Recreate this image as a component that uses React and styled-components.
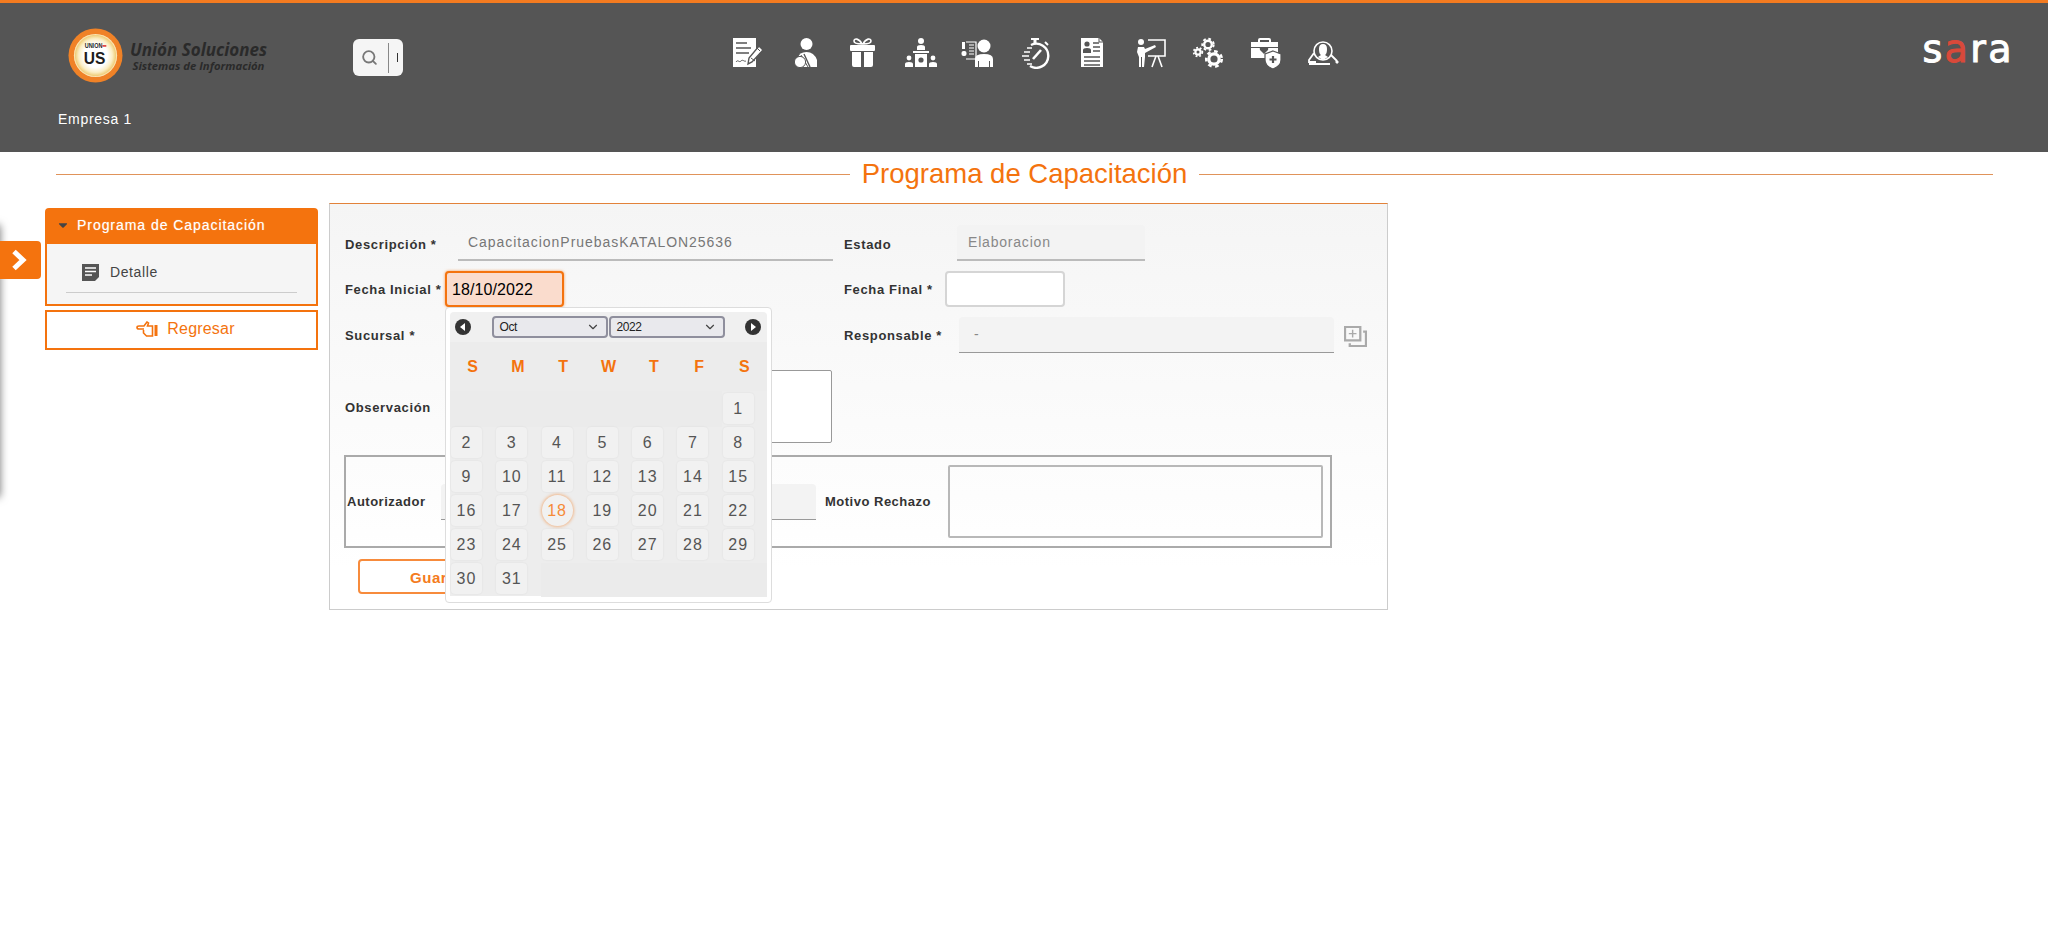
import React from 'react';
import styled, { createGlobalStyle } from 'styled-components';
import { FaCaretDown } from 'react-icons/fa';
import { ChevronDown, Search } from 'lucide-react';

const GRAY = '#555555';
const ORANGE = '#f4730e';

const DAYS = Array.from({ length: 31 }, (_, i) => i + 1);
const WEEK = ['S', 'M', 'T', 'W', 'T', 'F', 'S'];

const Doc = () => (
  <IconSvg viewBox="0 0 34 32">
    <path d="M3 1h23v29H3z" fill="#fff" />
    <path d="M6 6h11M6 11h15M6 16h13" stroke={GRAY} strokeWidth="1.6" />
    <path d="M6 25c2-3 3 1 5-1s3 1 5 0" stroke={GRAY} strokeWidth="1" fill="none" />
    <path d="M18 27l1-6L29 9l4 4-11 12z" fill="#fff" stroke={GRAY} strokeWidth="1.4" />
    <path d="M21 21l4 3M27 11l3 3" stroke={GRAY} strokeWidth="1" />
  </IconSvg>
);

const PersonMoney = () => (
  <IconSvg viewBox="0 0 34 32">
    <circle cx="18.500" cy="7" r="6" fill="#fff" />
    <path d="M10 30V21q1-6 8.500-6t10.500 8v7z" fill="#fff" />
    <path d="M16 17l6 13" stroke={GRAY} strokeWidth="1.4" />
    <path d="M13 18l7 12" stroke={GRAY} strokeWidth="1" />
    <circle cx="12" cy="25" r="5.6" fill="#fff" stroke={GRAY} strokeWidth="1" />
  </IconSvg>
);

const Gift = () => (
  <IconSvg viewBox="0 0 34 32">
    <g transform="translate(2 0)">
      <path d="M4 8h23q1 0 1 1v4q0 1-1 1H4q-1 0-1-1V9q0-1 1-1zM5 15h9v15H7q-2 0-2-2zM17 15h9v13q0 2-2 2h-7z" fill="#fff" />
      <path d="M15 7C12 1 7 1 7 4c0 2 4 3 8 3zM16 7c3-6 8-6 8-3 0 2-4 3-8 3z" fill="none" stroke="#fff" strokeWidth="1.6" />
    </g>
  </IconSvg>
);

const Podium = () => (
  <IconSvg viewBox="0 0 34 32">
    <circle cx="18" cy="4" r="3" fill="#fff" />
    <path d="M14 13v-3q0-2 4-2t4 2v3zM10 14h16v2H10zM12 17h12v13H12z" fill="#fff" />
    <circle cx="18" cy="23" r="2.6" fill={GRAY} />
    <circle cx="6" cy="21" r="2.4" fill="#fff" />
    <circle cx="30" cy="21" r="2.4" fill="#fff" />
    <path d="M2 30v-3q0-2 4-2t4 2v3zM26 30v-3q0-2 4-2t4 2v3z" fill="#fff" />
  </IconSvg>
);

const PersonBill = () => (
  <IconSvg viewBox="0 0 34 32">
    <circle cx="23" cy="9" r="6.5" fill="#fff" />
    <path d="M14 30V22q0-5 9-5t9 5v8h-3v-6h-1v6H18v-6h-1v6z" fill="#fff" />
    <path d="M5 5h10v17H5" fill="none" stroke="#fff" strokeWidth="1.2" />
    <path d="M8 8h5M8 11h5M8 14h5M8 17h5" stroke="#fff" strokeWidth="1.2" />
    <path d="M1 5h3v7H1z" fill="#fff" />
    <rect x="0.5" y="14" width="5" height="5" rx="2" fill="#fff" />
  </IconSvg>
);

const Stopwatch = () => (
  <IconSvg viewBox="0 0 34 32">
    <path d="M13 1h8v2h-8zM15.500 3h3v3h-3z" fill="#fff" />
    <path d="M13 8a12 12 0 1 1-1 21" fill="none" stroke="#fff" strokeWidth="2.400" />
    <path d="M27 5l3 3" stroke="#fff" strokeWidth="2" />
    <path d="M15 22l8-9" stroke="#fff" strokeWidth="2.600" />
    <path d="M9 11h5M6 15h6M4 19h7M6 23h6M9 27h5" stroke="#fff" strokeWidth="1.700" />
  </IconSvg>
);

const Resume = () => (
  <IconSvg viewBox="0 0 34 32">
    <path d="M5 1h18l4 4v25H5z" fill="#fff" />
    <path d="M23 1v4h4" fill="none" stroke={GRAY} strokeWidth="1" />
    <circle cx="11" cy="7" r="2.600" fill={GRAY} />
    <path d="M7 16v-3q0-2 4-2t4 2v3z" fill={GRAY} />
    <path d="M17 6h6M17 10h7M17 14h7M8 20h16M8 24h16M8 28h16" stroke={GRAY} strokeWidth="1.500" />
  </IconSvg>
);

const Presenter = () => (
  <IconSvg viewBox="0 0 34 32">
    <circle cx="7" cy="5" r="3" fill="#fff" />
    <path d="M4 10h6l1 2 10-4 1 2-11 6v4l-1 10H8v-10H7v10H5V20L3 15z" fill="#fff" />
    <path d="M14 3h17v16H14" fill="none" stroke="#fff" strokeWidth="1.600" />
    <path d="M22 19l-4 11M24 19l4 11" stroke="#fff" strokeWidth="1.600" />
  </IconSvg>
);

const Gear = ({ cx, cy, r, w }) => (
  <g fill="none" stroke="#fff">
    <circle cx={cx} cy={cy} r={r} strokeWidth={w} />
    <circle cx={cx} cy={cy} r={r + w * 0.8} strokeWidth={w * 0.8} strokeDasharray={`${r * 0.7} ${r * 0.7}`} />
  </g>
);

const Gears = () => (
  <IconSvg viewBox="0 0 34 32">
    <g transform="translate(1 0)">
      <Gear cx={6} cy={15} r={2.600} w={2.200} />
      <Gear cx={16} cy={7.500} r={3.800} w={2.400} />
      <Gear cx={22} cy={22} r={5.200} w={3.200} />
    </g>
  </IconSvg>
);

const MedKit = () => (
  <IconSvg viewBox="0 0 34 32">
    <g transform="translate(1 0)">
      <path d="M8 5V3q0-2 2-2h9q2 0 2 2v2h-2V3h-9v2z" fill="#fff" />
      <path d="M1 5h27v5H1zM1 11h27v7H17l-2 2v1H1z" fill="#fff" />
      <path d="M14 17l-4-4q-1-3 2-3 1 0 2 1 1-1 2-1 3 0 2 3z" fill={GRAY} />
      <path d="M23 14l8 3v6q0 6-8 9-8-3-8-9v-6z" fill="#fff" stroke={GRAY} strokeWidth="1.200" />
      <path d="M23 19v7M19.500 22.500h7" stroke={GRAY} strokeWidth="2.200" />
    </g>
  </IconSvg>
);

const HeadSearch = () => (
  <IconSvg viewBox="0 0 34 32">
    <circle cx="16" cy="14" r="9" fill="none" stroke="#fff" strokeWidth="1.600" />
    <path d="M16 7q4 0 4 5t-2 6l3 2-5 3-5-3 3-2q-2-1-2-6t4-5z" fill="#fff" />
    <path d="M7 16l-5 7v2h7M24 18l6 6" fill="none" stroke="#fff" strokeWidth="1.800" />
    <path d="M2 26h21v2H2z" fill="#fff" />
    <path d="M29 24l2 2" stroke="#fff" strokeWidth="2.600" />
  </IconSvg>
);

const MENU_ICONS = [Doc, PersonMoney, Gift, Podium, PersonBill, Stopwatch, Resume, Presenter, Gears, MedKit, HeadSearch];

const CompanyLogo = () => (
  <LogoWrap>
    <LogoMark viewBox="0 0 56 56">
      <defs>
        <radialGradient id="logoCore">
          <stop offset="55%" stopColor="#ffffff" />
          <stop offset="78%" stopColor="#fbeec4" />
          <stop offset="93%" stopColor="#f0cf7e" />
          <stop offset="100%" stopColor="#fff3d2" />
        </radialGradient>
      </defs>
      <circle cx="28" cy="28" r="27.500" fill="#f08227" />
      <circle cx="28" cy="28" r="22" fill="url(#logoCore)" />
      <text x="26" y="20" fontFamily="Liberation Sans" fontSize="7" fontWeight="700" textAnchor="middle" textLength="18" lengthAdjust="spacingAndGlyphs" fill="#222">UNION</text>
      <text x="27" y="37" fontFamily="Liberation Sans" fontSize="17" fontWeight="700" textAnchor="middle" textLength="22" lengthAdjust="spacingAndGlyphs" fill="#1d1d1d">US</text>
      <rect x="35" y="17.500" width="4" height="1.500" fill="#d22" />
    </LogoMark>
    <LogoText>
      <LogoName>Unión Soluciones</LogoName>
      <LogoSub>Sistemas de Información</LogoSub>
    </LogoText>
  </LogoWrap>
);

const App = () => (
  <>
    <GlobalStyle />
    <Header>
      <HeaderTop>
        <CompanyLogo />
        <SearchBox>
          <Search size={17} strokeWidth={2.600} color="#777" />
          <SearchDivider />
          <SearchCaret />
        </SearchBox>
        <IconMenu>
          {MENU_ICONS.map((Icon, i) => (
            <MenuItem key={i}>
              <Icon />
            </MenuItem>
          ))}
        </IconMenu>
        <SaraLogo>
          s<SaraRed>a</SaraRed>ra
        </SaraLogo>
      </HeaderTop>
      <Company>Empresa 1</Company>
    </Header>

    <TitleRow>
      <TitleLine />
      <Title>Programa de Capacitación</Title>
      <TitleLine />
    </TitleRow>

    <DrawerEdge />
    <DrawerToggle>
      <svg width="17" height="22" viewBox="0 0 17 22">
        <path d="M3 2.500l9 8.500-9 8.500" fill="none" stroke="#fff" strokeWidth="5" />
      </svg>
    </DrawerToggle>

    <Main>
      <Sidebar>
        <AccordionHead>
          <FaCaretDown size={14} color="#444" />
          Programa de Capacitación
        </AccordionHead>
        <AccordionBody>
          <AccordionItem>
            <svg width="17" height="17" viewBox="0 0 17 17">
              <path d="M0 0h17v13l-4 4H0z" fill="#555" />
              <path d="M3 4h11M3 7.500h11M3 11h7" stroke="#fff" strokeWidth="1.400" />
            </svg>
            Detalle
          </AccordionItem>
        </AccordionBody>
        <BackButton>
          <svg width="22" height="17" viewBox="0 0 22 17">
            <path d="M1 6.500q0-1.500 2-1.500h5l3-4 1.500 1-1 3h5v10h-6l-3-3v-3M1 6.500q0 1.500 2 1.500h5" fill="none" stroke={ORANGE} strokeWidth="1.600" />
            <path d="M18.500 4h3v11h-3z" fill={ORANGE} />
          </svg>
          Regresar
        </BackButton>
      </Sidebar>

      <FormPanel>
        <FormGrid>
          <Field>
            <Label $w={113} $dy={2}>Descripción *</Label>
            <TextValue>CapacitacionPruebasKATALON25636</TextValue>
          </Field>
          <Field>
            <Label $w={113} $dy={2}>Estado</Label>
            <ReadOnly $w={188} $line="2px solid #bbb">Elaboracion</ReadOnly>
          </Field>

          <Field>
            <Label $w={100}>Fecha Inicial *</Label>
            <DateWrap>
              <DateInput $focused $w={119}>18/10/2022</DateInput>
              <Picker>
                <PickerHead>
                  <NavButton>
                    <svg width="16" height="16" viewBox="0 0 16 16">
                      <circle cx="8" cy="8" r="8" fill="#333" />
                      <path d="M10 4v8L5 8z" fill="#fff" />
                    </svg>
                  </NavButton>
                  <Selects>
                    <FakeSelect>
                      Oct
                      <ChevronDown size={14} color="#444" />
                    </FakeSelect>
                    <FakeSelect>
                      2022
                      <ChevronDown size={14} color="#444" />
                    </FakeSelect>
                  </Selects>
                  <NavButton>
                    <svg width="16" height="16" viewBox="0 0 16 16">
                      <circle cx="8" cy="8" r="8" fill="#333" />
                      <path d="M6 4v8l5-4z" fill="#fff" />
                    </svg>
                  </NavButton>
                </PickerHead>
                <WeekRow>
                  {WEEK.map((d, i) => (
                    <WeekDay key={i}>{d}</WeekDay>
                  ))}
                </WeekRow>
                <DayGrid>
                  <EmptyCells $span={6} $first />
                  {DAYS.map((d) => (
                    <Day key={d} $today={d === 18}>
                      {d}
                    </Day>
                  ))}
                  <EmptyCells $span={5} />
                </DayGrid>
              </Picker>
            </DateWrap>
          </Field>
          <Field>
            <Label $w={101}>Fecha Final *</Label>
            <DateInput $w={120} />
          </Field>

          <Field>
            <Label $w={113}>Sucursal *</Label>
            <ReadOnly $w={240} $line="1px solid #aaa" />
          </Field>
          <Field>
            <Label $w={115}>Responsable *</Label>
            <ReadOnly $w={375} $pad={15} $line="1px solid #999">-</ReadOnly>
            <CopyIcon viewBox="0 0 24 22">
              <path d="M1 1h16v14H1z" fill="none" stroke="#aaa" strokeWidth="2.400" />
              <path d="M9 4v8M5 8h8" stroke="#aaa" strokeWidth="1.500" />
              <path d="M20 6h3v15H6v-3" fill="none" stroke="#aaa" strokeWidth="2.400" />
            </CopyIcon>
          </Field>

          <ObservationField>
            <Label $w={113} $dy={2}>Observación</Label>
            <TextArea $h={73} $grow $bg="#fff" $line="1px solid #999" />
          </ObservationField>
        </FormGrid>

        <AuthBox>
          <Label $w={94} $tight>Autorizador</Label>
          <ReadOnly $w={375} $line="1px solid #999" />
          <MotiveLabel $tight>Motivo Rechazo</MotiveLabel>
          <TextArea $h={73} $w={375} $bg="transparent" $line="2px solid #b8b8b8" />
        </AuthBox>

        <SaveButton>Guardar</SaveButton>
      </FormPanel>
    </Main>
  </>
);

export default App;

const GlobalStyle = createGlobalStyle`
  html, body {
    margin: 0;
    background: #fff;
    font-family: "Liberation Sans", Arial, sans-serif;
  }
  body {
    min-height: 947px;
    position: relative;
    overflow: hidden;
  }
`;

const Header = styled.header`
  height: 152px;
  box-sizing: border-box;
  border-top: 3px solid #f47b20;
  background: ${GRAY};
  padding-top: 25px;
`;

const HeaderTop = styled.div`
  display: flex;
  align-items: flex-start;
  height: 54px;
  padding-left: 68px;
`;

const LogoWrap = styled.div`
  display: flex;
  align-items: center;
  width: 285px;
  gap: 7px;
`;

const LogoMark = styled.svg`
  width: 55px;
  height: 55px;
  flex-shrink: 0;
`;

const LogoText = styled.div`
  display: flex;
  flex-direction: column;
  align-items: center;
  color: #2a2a2a;
  font-family: "Open Sans", sans-serif;
  font-style: italic;
  font-weight: 700;
`;

const LogoName = styled.span`
  font-size: 17px;
  line-height: 21px;
  white-space: nowrap;
`;

const LogoSub = styled.span`
  font-size: 11.300px;
  line-height: 12px;
  white-space: nowrap;
`;

const SearchBox = styled.div`
  display: flex;
  align-items: center;
  width: 50px;
  height: 37px;
  margin-top: 11px;
  box-sizing: border-box;
  padding-left: 8px;
  background: #f5f5f5;
  border-radius: 6px;
`;

const SearchDivider = styled.span`
  width: 1px;
  height: 30px;
  margin-left: 10px;
  background: #888;
`;

const SearchCaret = styled.span`
  width: 1px;
  height: 9px;
  margin-left: 8px;
  background: #333;
`;

const IconMenu = styled.nav`
  display: flex;
  margin-left: 315px;
  margin-top: 9px;
`;

const MenuItem = styled.div`
  width: 57.700px;
  display: flex;
  justify-content: center;
`;

const IconSvg = styled.svg`
  width: 34px;
  height: 32px;
  display: block;
`;

const SaraLogo = styled.div`
  margin-left: auto;
  margin-right: 34px;
  margin-top: 2px;
  color: #fff;
  font-family: "DejaVu Sans", sans-serif;
  font-size: 38px;
  line-height: 38px;
  letter-spacing: 2.400px;
  -webkit-text-stroke: 1px;
`;

const SaraRed = styled.span`
  color: #d9493a;
`;

const Company = styled.div`
  margin-top: 29px;
  padding-left: 58px;
  color: #fff;
  font-size: 14px;
  line-height: 16px;
  letter-spacing: 0.7px;
`;

const TitleRow = styled.div`
  display: flex;
  align-items: center;
  gap: 12px;
  margin: 6px 55px 0 56px;
`;

const TitleLine = styled.span`
  flex: 1;
  height: 1px;
  background: #e0935a;
`;

const Title = styled.h1`
  margin: 0 0 2px;
  color: ${ORANGE};
  font-size: 27.500px;
  font-weight: 400;
  line-height: 31px;
  white-space: nowrap;
`;

const DrawerEdge = styled.div`
  position: absolute;
  top: 225px;
  left: -10px;
  width: 10px;
  height: 272px;
  box-shadow: 0 0 9px rgba(0, 0, 0, 0.55);
`;

const DrawerToggle = styled.div`
  position: absolute;
  top: 241px;
  left: 0;
  width: 41px;
  height: 38px;
  display: flex;
  align-items: center;
  padding-left: 11px;
  box-sizing: border-box;
  background: ${ORANGE};
  border-radius: 0 4px 4px 0;
`;

const Main = styled.main`
  display: flex;
  align-items: flex-start;
  gap: 11px;
  margin-top: 12px;
  padding-left: 45px;
`;

const Sidebar = styled.aside`
  width: 273px;
  margin-top: 5px;
`;

const AccordionHead = styled.div`
  display: flex;
  align-items: center;
  gap: 7px;
  height: 36px;
  box-sizing: border-box;
  padding: 0 0 2px 11px;
  background: ${ORANGE};
  border-radius: 4px 4px 0 0;
  color: #fff;
  font-size: 14px;
  letter-spacing: 0.95px;
  text-shadow: 0 0 1px rgba(255, 255, 255, 0.5);
`;

const AccordionBody = styled.div`
  height: 62px;
  box-sizing: border-box;
  padding: 0 19px;
  background: #f5f5f5;
  border: 2px solid ${ORANGE};
  border-top: none;
`;

const AccordionItem = styled.div`
  display: flex;
  align-items: center;
  gap: 11px;
  height: 49px;
  box-sizing: border-box;
  padding: 8px 0 0 16px;
  border-bottom: 1px solid #ccc;
  color: #444;
  font-size: 14px;
  letter-spacing: 0.6px;
`;

const BackButton = styled.div`
  display: flex;
  align-items: center;
  justify-content: center;
  gap: 9px;
  height: 40px;
  box-sizing: border-box;
  margin-top: 4px;
  padding: 0 0 2px 8px;
  background: #fff;
  border: 2px solid ${ORANGE};
  color: ${ORANGE};
  font-size: 16px;
  letter-spacing: 0.2px;
`;

const FormPanel = styled.section`
  width: 1059px;
  box-sizing: border-box;
  padding: 21px 0 15px 15px;
  border: 1px solid #ccc;
  border-top: 1px solid #e2823a;
  background: linear-gradient(#f5f5f5, #fff 90%);
`;

const FormGrid = styled.div`
  display: grid;
  grid-template-columns: 488px 1fr;
  column-gap: 11px;
  row-gap: 10px;
`;

const Field = styled.div`
  display: flex;
  align-items: center;
  height: 36px;
`;

const ObservationField = styled(Field)`
  height: 73px;
  margin-top: 7px;
`;

const Label = styled.label`
  flex-shrink: 0;
  width: ${(p) => p.$w}px;
  margin-top: ${(p) => p.$dy || 0}px;
  color: #333;
  font-size: 13px;
  font-weight: 700;
  letter-spacing: ${(p) => (p.$tight ? 0.5 : 0.65)}px;
  white-space: nowrap;
`;

const MotiveLabel = styled(Label)`
  width: 123px;
  margin-left: 9px;
`;

const TextValue = styled.div`
  flex: 1;
  height: 36px;
  box-sizing: border-box;
  padding-left: 10px;
  border-bottom: 2px solid #bbb;
  color: #777;
  font-size: 14px;
  line-height: 35px;
  letter-spacing: 0.95px;
  white-space: nowrap;
`;

const ReadOnly = styled.div`
  width: ${(p) => p.$w}px;
  height: 36px;
  flex-shrink: 0;
  box-sizing: border-box;
  padding-left: ${(p) => p.$pad || 11}px;
  background: #f3f3f3;
  border-bottom: ${(p) => p.$line};
  border-radius: 4px 4px 0 0;
  color: #888;
  font-size: 14px;
  line-height: 35px;
  letter-spacing: 0.8px;
`;

const CopyIcon = styled.svg`
  width: 23px;
  height: 21px;
  margin: 2px 0 0 10px;
`;

const DateWrap = styled.div`
  position: relative;
`;

const DateInput = styled.div`
  width: ${(p) => p.$w}px;
  height: 36px;
  box-sizing: border-box;
  padding-left: 5px;
  border: 2px solid ${(p) => (p.$focused ? ORANGE : '#d5d5d5')};
  border-radius: 4px;
  background: ${(p) => (p.$focused ? '#fadccd' : '#fff')};
  box-shadow: ${(p) => (p.$focused ? '0 0 3px rgba(244, 115, 14, 0.7)' : 'none')};
  color: #000;
  font-size: 16px;
  line-height: 34px;
  letter-spacing: 0.1px;
`;

const Picker = styled.div`
  position: absolute;
  top: 36px;
  left: 0;
  z-index: 5;
  width: 327px;
  height: 296px;
  box-sizing: border-box;
  padding: 4px;
  background: #fff;
  border: 1px solid #ddd;
  border-radius: 4px;
`;

const PickerHead = styled.div`
  display: flex;
  align-items: center;
  justify-content: space-between;
  height: 30px;
  box-sizing: border-box;
  padding: 0 6px 0 5px;
  background: #f0f0f0;
  border-radius: 4px 4px 0 0;
`;

const NavButton = styled.span`
  display: flex;
`;

const Selects = styled.div`
  display: flex;
  gap: 1px;
`;

const FakeSelect = styled.div`
  display: flex;
  align-items: center;
  justify-content: space-between;
  width: 116px;
  height: 22px;
  box-sizing: border-box;
  padding: 0 6px;
  background: #e9e9ed;
  border: 2px solid #8f8f9d;
  border-radius: 4px;
  color: #222;
  font-size: 12px;
  letter-spacing: -0.4px;
`;

const WeekRow = styled.div`
  display: grid;
  grid-template-columns: repeat(7, 1fr);
  height: 49px;
  align-items: center;
  background: #ececec;
`;

const WeekDay = styled.span`
  color: ${ORANGE};
  font-size: 16px;
  font-weight: 700;
  text-align: center;
`;

const DayGrid = styled.div`
  display: grid;
  grid-template-columns: repeat(7, 1fr);
  grid-auto-rows: 34px;
  height: 205px;
  box-sizing: border-box;
  padding: 2px 0 0 0;
  background: #ededed;
`;

const EmptyCells = styled.span`
  grid-column: span ${(p) => p.$span};
  margin-top: ${(p) => (p.$first ? -2 : 0)}px;
  background: #ebebeb;
`;

const Day = styled.span`
  width: 31px;
  height: 31px;
  margin-left: 1px;
  background: #f1f1f1;
  border-radius: ${(p) => (p.$today ? '50%' : '4px')};
  box-shadow: ${(p) => (p.$today ? '0 0 3px 1px rgba(244, 140, 60, 0.55)' : '0 0 2px rgba(0, 0, 0, 0.08)')};
  color: ${(p) => (p.$today ? '#f68a38' : '#555')};
  font-size: 16px;
  line-height: 31px;
  letter-spacing: 1px;
  text-align: center;
`;

const TextArea = styled.div`
  flex: ${(p) => (p.$grow ? 1 : 'none')};
  width: ${(p) => (p.$w ? `${p.$w}px` : 'auto')};
  height: ${(p) => p.$h}px;
  box-sizing: border-box;
  margin-right: 1px;
  background: ${(p) => p.$bg};
  border: ${(p) => p.$line};
  border-radius: 2px;
`;

const AuthBox = styled.div`
  display: flex;
  align-items: center;
  width: 988px;
  height: 93px;
  box-sizing: border-box;
  margin: 12px 0 0 -1px;
  padding-left: 1px;
  border: 2px solid #aaa;
`;

const SaveButton = styled.div`
  width: 166px;
  height: 35px;
  box-sizing: border-box;
  margin: 11px 0 0 13px;
  border: 2px solid #f78b3c;
  border-radius: 4px;
  background: #fff;
  color: #f47b20;
  font-size: 15px;
  font-weight: 700;
  line-height: 33px;
  letter-spacing: 0.5px;
  text-align: center;
`;
